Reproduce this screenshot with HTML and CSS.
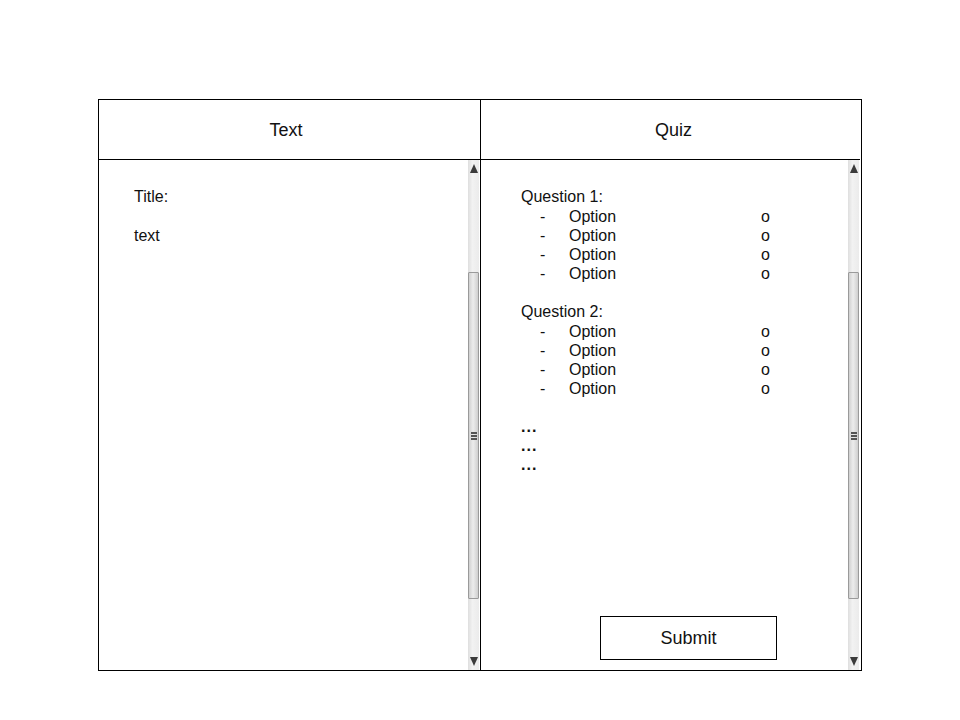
FILE: index.html
```html
<!DOCTYPE html>
<html>
<head>
<meta charset="utf-8">
<link rel="stylesheet" href="styles.css">
</head>
<body>
<div class="page">
  <div class="frame">
    <section class="panel panel-left">
      <header class="panel-head">Text</header>
      <div class="panel-body">
        <div class="content content-text">
          <p class="line">Title:</p>
          <p class="line blank"></p>
          <p class="line">text</p>
        </div>
        <div class="scrollbar">
          <span class="arrow arrow-up"></span>
          <span class="thumb"><span class="grip"></span></span>
          <span class="arrow arrow-down"></span>
        </div>
      </div>
    </section>
    <section class="panel panel-right">
      <header class="panel-head">Quiz</header>
      <div class="panel-body">
        <div class="content content-quiz">
          <div class="question">
            <p class="line q-title">Question 1:</p>
            <div class="opt"><span class="dash">-</span><span class="label">Option</span><span class="radio">o</span></div>
            <div class="opt"><span class="dash">-</span><span class="label">Option</span><span class="radio">o</span></div>
            <div class="opt"><span class="dash">-</span><span class="label">Option</span><span class="radio">o</span></div>
            <div class="opt"><span class="dash">-</span><span class="label">Option</span><span class="radio">o</span></div>
          </div>
          <div class="question">
            <p class="line q-title">Question 2:</p>
            <div class="opt"><span class="dash">-</span><span class="label">Option</span><span class="radio">o</span></div>
            <div class="opt"><span class="dash">-</span><span class="label">Option</span><span class="radio">o</span></div>
            <div class="opt"><span class="dash">-</span><span class="label">Option</span><span class="radio">o</span></div>
            <div class="opt"><span class="dash">-</span><span class="label">Option</span><span class="radio">o</span></div>
          </div>
          <div class="more">
            <p class="line dots">...</p>
            <p class="line dots">...</p>
            <p class="line dots">...</p>
          </div>
          <button class="submit" type="button">Submit</button>
        </div>
        <div class="scrollbar">
          <span class="arrow arrow-up"></span>
          <span class="thumb"><span class="grip"></span></span>
          <span class="arrow arrow-down"></span>
        </div>
      </div>
    </section>
  </div>
</div>
</body>
</html>
```

FILE: styles.css
```css
html, body {
  margin: 0;
  padding: 0;
  background: #ffffff;
}

body {
  font-family: "Liberation Sans", Arial, sans-serif;
  color: #111111;
}

.page {
  padding: 99px 0 0 98px;
}

.frame {
  width: 762px;
  height: 570px;
  border: 1px solid #000000;
  display: grid;
  grid-template-columns: 381px 381px;
}

.panel {
  display: flex;
  flex-direction: column;
  min-height: 0;
}

.panel-left {
  border-right: 1px solid #000000;
  width: 381px;
}

.panel-right {
  width: 380px;
}

.panel-head {
  border-bottom: 1px solid #000000;
  display: flex;
  align-items: center;
  justify-content: center;
  font-size: 18px;
  padding-top: 1px;
  box-sizing: border-box;
  height: 60px;
}

.panel-left .panel-head {
  padding-right: 7px;
}

.panel-right .panel-head {
  padding-left: 7px;
}

.panel-body {
  flex: 1;
  display: grid;
  grid-template-columns: 1fr 12px;
  min-height: 0;
}

.content {
  padding-top: 27px;
  font-size: 16px;
  line-height: 19px;
}

.content-text {
  padding-left: 35px;
}

.content-text .blank {
  height: 20px;
}

.content-quiz {
  padding-left: 41px;
  display: flex;
  flex-direction: column;
}

.line {
  margin: 0;
  height: 19px;
}

.q-title {
  height: 20px;
}

.question {
  margin-bottom: 19px;
}

.opt {
  display: grid;
  grid-template-columns: 29px 192px auto;
  padding-left: 19px;
  height: 19px;
}

.dots {
  font-weight: bold;
  letter-spacing: 1px;
}

.submit {
  margin-top: auto;
  margin-bottom: 10px;
  margin-left: 79px;
  align-self: flex-start;
  width: 177px;
  height: 44px;
  background: #ffffff;
  border: 1px solid #000000;
  border-radius: 0;
  font-family: "Liberation Sans", Arial, sans-serif;
  font-size: 18px;
  color: #111111;
  padding: 0;
}

.scrollbar {
  display: flex;
  flex-direction: column;
  align-items: center;
  background: linear-gradient(to right, #dedede, #f2f2f2 40%, #ebebeb);
  margin-right: 1px;
}

.arrow {
  width: 0;
  height: 0;
  border-left: 4px solid transparent;
  border-right: 4px solid transparent;
}

.arrow-up {
  margin-top: 4px;
  border-bottom: 9px solid #3a3a3a;
}

.arrow-down {
  margin-top: auto;
  margin-bottom: 4px;
  border-top: 9px solid #3a3a3a;
}

.thumb {
  margin-top: 99px;
  width: 9px;
  height: 325px;
  border: 1px solid #9a9a9a;
  border-radius: 1px;
  background: linear-gradient(to right, #d0d0d0, #ececec 45%, #cfcfcf);
  display: flex;
  align-items: center;
  justify-content: center;
}

.grip {
  width: 6px;
  height: 8px;
  background: repeating-linear-gradient(to bottom, #555555 0, #555555 2px, transparent 2px, transparent 3px);
}
```
